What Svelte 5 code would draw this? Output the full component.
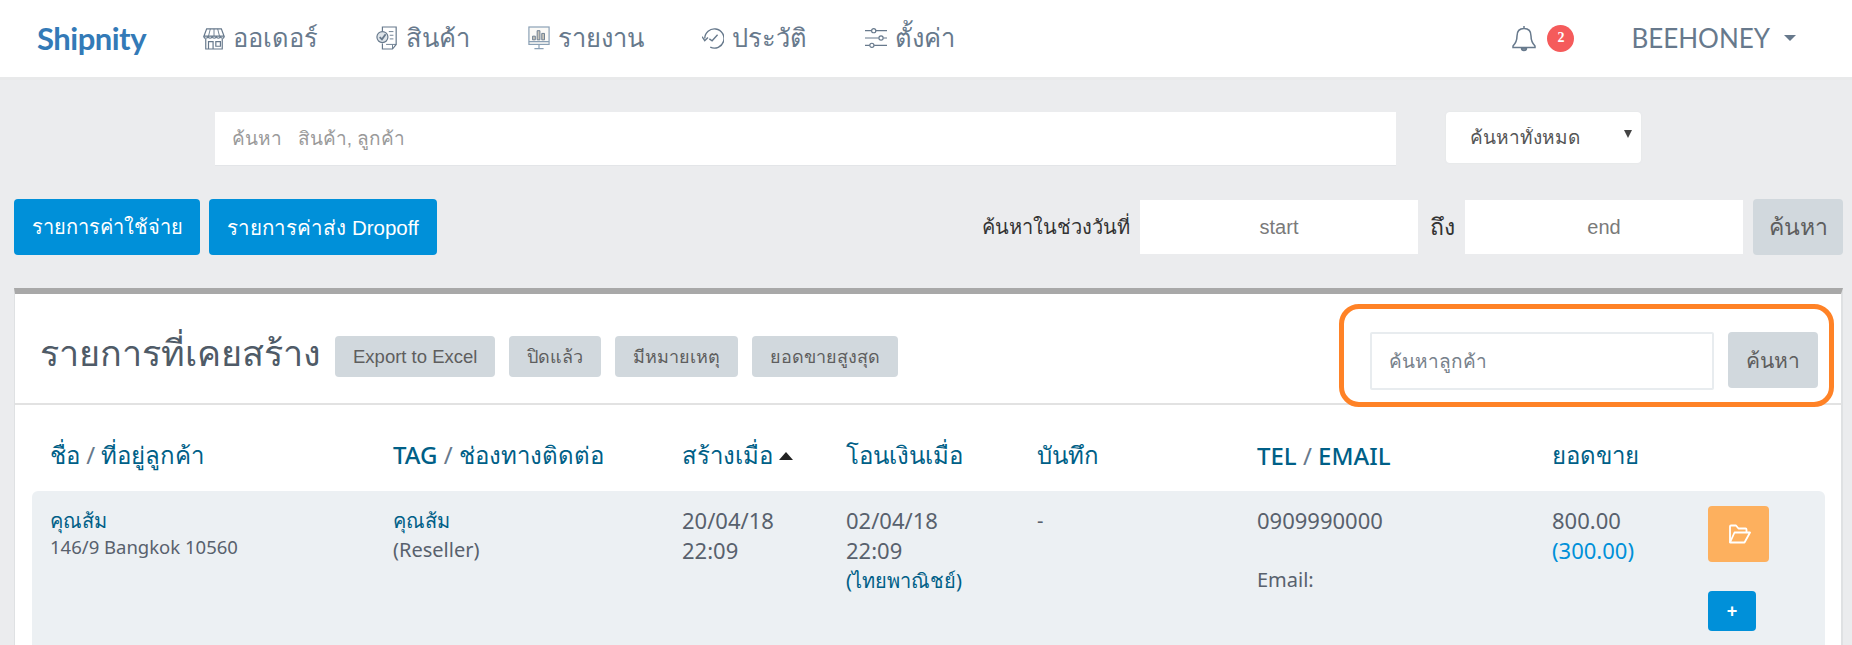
<script lang="ts">
	const navItems = [
		{ label: 'ออเดอร์', icon: 'store' },
		{ label: 'สินค้า', icon: 'doc' },
		{ label: 'รายงาน', icon: 'report' },
		{ label: 'ประวัติ', icon: 'history' },
		{ label: 'ตั้งค่า', icon: 'sliders' }
	];
	const filters = ['Export to Excel', 'ปิดแล้ว', 'มีหมายเหตุ', 'ยอดขายสูงสุด'];
</script>

<header class="navbar">
	<a class="brand" href="#top">Shipnity</a>
	<nav class="menu">
		{#each navItems as item}
			<a class="menu-item {item.icon}" href="#top">
				<svg viewBox="0 0 24 26" width="22" height="24" fill="none" stroke="#67798c" stroke-width="1.3">
					{#if item.icon === 'store'}
						<path d="M4 3h16l3 8H1z" />
						<path d="M8 3l-2 8M12 3v8M16 3l2 8" stroke-width="1" />
						<path d="M1 11c0 3 4 3 4.500 0 .5 3 4 3 4.500 0 .5 3 4 3 4.500 0 .5 3 4 3 4.500 0 .5 3 4 3 4 0" />
						<path d="M3 14v11h18V14M6 25v-8h5v8M14 17h5v5h-5z" />
					{:else if item.icon === 'doc'}
						<path d="M7 6V1h15v19l-4 5H7v-6" />
						<path d="M22 20h-4v5M14 6h5M15 10h4M15 14h4M11 20h7" stroke-width="1" />
						<circle cx="7" cy="12" r="6" fill="#dfe5ea" />
						<path d="M4 12l2.500 2.500L10.500 9" stroke-width="2" />
					{:else if item.icon === 'report'}
						<rect x="1" y="1" width="22" height="19" stroke="#8aa0b5" fill="#fbfaf7" />
						<path d="M1 17h22M12 20v4M7 24.500h10" stroke="#8aa0b5" />
						<path d="M5 15v-4h3v4zM10 15V5h3v10zM15 15V8h3v7z" fill="#c9c5ba" stroke="#67798c" stroke-width="1" />
					{:else if item.icon === 'history'}
						<path d="M9 23A10.500 10.500 0 1 0 3 13.500" stroke-width="1.500" />
						<path d="M0 11.500l3 4.500 3.500-3.500" stroke-width="1.500" />
						<path d="M8 14l3 2 6-6.500" stroke-width="1.500" />
					{:else}
						<path d="M0 5h7M12 5h12M0 13h15M20 13h4M0 21h5M10 21h14" />
						<circle cx="9.500" cy="5" r="2.300" />
						<circle cx="17.500" cy="13" r="2.300" />
						<circle cx="7.500" cy="21" r="2.300" />
					{/if}
				</svg>
				<span>{item.label}</span>
			</a>
		{/each}
	</nav>
	<div class="user-area">
		<svg class="bell" viewBox="0 0 24 27" width="24" height="27" fill="none" stroke="#67798c" stroke-width="1.500">
			<path d="M12 1v2.500M12 3.500c-4.500 0-7 3-7 7.500 0 5-2 8-4 10v1.500h22V21c-2-2-4-5-4-10 0-4.500-2.500-7.500-7-7.500z" />
			<path d="M9.500 23a2.500 2.500 0 0 0 5 0z" fill="#8b98a5" />
		</svg>
		<span class="badge">2</span>
		<span class="username">BEEHONEY</span>
		<span class="caret"></span>
	</div>
</header>

<main>
	<form class="search-row">
		<input class="main-search" type="text" placeholder="ค้นหา   สินค้า, ลูกค้า" />
		<div class="select-wrap">
			<select>
				<option>ค้นหาทั้งหมด</option>
			</select>
		</div>
	</form>

	<div class="toolbar">
		<div class="actions">
			<button class="btn-blue first">รายการค่าใช้จ่าย</button>
			<button class="btn-blue second">รายการค่าส่ง Dropoff</button>
		</div>
		<div class="date-range">
			<span class="range-label">ค้นหาในช่วงวันที่</span>
			<input class="date" type="text" placeholder="start" />
			<span class="range-to">ถึง</span>
			<input class="date" type="text" placeholder="end" />
			<button class="btn-grey range-go">ค้นหา</button>
		</div>
	</div>

	<section class="card">
		<div class="card-head">
			<h2>รายการที่เคยสร้าง</h2>
			<div class="filters">
				{#each filters as label}
					<button class="btn-grey filter">{label}</button>
				{/each}
			</div>
			<div class="customer-search">
				<input type="text" placeholder="ค้นหาลูกค้า" />
				<button class="btn-grey">ค้นหา</button>
				<div class="highlight"></div>
			</div>
		</div>

		<table>
			<thead>
				<tr>
					<th>ชื่อ <i>/</i> ที่อยู่ลูกค้า</th>
					<th>TAG <i>/</i> ช่องทางติดต่อ</th>
					<th>สร้างเมื่อ <span class="sort"></span></th>
					<th>โอนเงินเมื่อ</th>
					<th>บันทึก</th>
					<th>TEL <i>/</i> EMAIL</th>
					<th>ยอดขาย</th>
					<th></th>
				</tr>
			</thead>
			<tbody>
				<tr>
					<td class="customer"><b>คุณส้ม</b><small>146/9 Bangkok 10560</small></td>
					<td><b>คุณส้ม</b><br />(Reseller)</td>
					<td><span class="num">20/04/18<br />22:09</span></td>
					<td><span class="num">02/04/18<br />22:09</span><br /><span class="bank">(ไทยพาณิชย์)</span></td>
					<td>-</td>
					<td><span class="num">0909990000</span><br /><br />Email:</td>
					<td><span class="num">800.00<br /><span class="paid">(300.00)</span></span></td>
					<td class="row-actions">
						<button class="open" aria-label="open">
							<svg viewBox="0 0 24 20" width="24" height="20" fill="none" stroke="#fff" stroke-width="1.800" stroke-linejoin="round">
								<path d="M3 18.500V2.500a1 1 0 0 1 1-1h5l2.500 3h7a1 1 0 0 1 1 1V8" />
								<path d="M3 18.500h14.500L23 8.500H7.500z" />
							</svg>
						</button>
						<button class="add">+</button>
					</td>
				</tr>
			</tbody>
		</table>
	</section>
</main>

<style>
	:global(body) {
		margin: 0;
		background: #ebecee;
		overflow: hidden;
		font-family: "Liberation Sans", Arial, sans-serif;
	}

	.navbar {
		display: flex;
		align-items: center;
		height: 76px;
		background: #fff;
		border-bottom: 3px solid #e8e9ea;
		padding: 0 0 1px 37px;
	}

	.brand {
		font-family: Lato, sans-serif;
		font-size: 31px;
		font-weight: 700;
		color: #337ab7;
		text-decoration: none;
		width: 166px;
		letter-spacing: -0.5px;
	}

	.menu {
		display: flex;
		gap: 58px;
	}

	.menu-item {
		display: flex;
		align-items: center;
		gap: 8px;
		color: #67798c;
		text-decoration: none;
		font-family: "Noto Sans", sans-serif;
		font-size: 25.500px;
	}

	.user-area {
		display: flex;
		align-items: center;
		margin-left: auto;
		padding-right: 56px;
	}

	.badge {
		width: 27px;
		height: 27px;
		border-radius: 50%;
		background: #f55b5b;
		color: #fff;
		font: bold 14px "Liberation Serif", serif;
		display: flex;
		align-items: center;
		justify-content: center;
		margin-left: 11px;
	}

	.username {
		margin-left: 57px;
		font-family: Lato, sans-serif;
		font-size: 26px;
		color: #67798c;
	}

	.caret {
		margin-left: 14px;
		border-left: 6.500px solid transparent;
		border-right: 6.500px solid transparent;
		border-top: 6px solid #67798c;
	}

	.search-row {
		display: flex;
		gap: 50px;
		padding: 32px 0 0 215px;
	}

	input {
		box-sizing: border-box;
		border: none;
		background: #fff;
		font-family: "Liberation Sans", Arial, sans-serif;
		outline: none;
	}

	.main-search {
		width: 1181px;
		height: 54px;
		padding: 0 17px;
		font-size: 19px;
		border-bottom: 1px solid #e3e5e8;
		white-space: pre;
	}

	.main-search::placeholder {
		color: #9a9a9a;
	}

	.select-wrap {
		position: relative;
		width: 195px;
		height: 51px;
	}

	.select-wrap::after {
		content: '';
		position: absolute;
		right: 9px;
		top: 18px;
		border-left: 4.500px solid transparent;
		border-right: 4.500px solid transparent;
		border-top: 8px solid #444;
	}

	select {
		appearance: none;
		width: 100%;
		height: 100%;
		border: none;
		border-radius: 4px;
		background: #fff;
		padding: 0 0 0 24px;
		font-family: "Liberation Sans", Arial, sans-serif;
		font-size: 19px;
		color: #555;
		box-shadow: 0 0 2px #e0e2e5;
	}

	.toolbar {
		display: flex;
		justify-content: space-between;
		align-items: center;
		padding: 33px 9px 0 14px;
	}

	.actions {
		display: flex;
		gap: 9px;
	}

	button {
		border: none;
		font-family: "Liberation Sans", Arial, sans-serif;
	}

	.btn-blue {
		height: 56px;
		background: #0090d9;
		color: #fff;
		border-radius: 4px;
		font-size: 20px;
		padding: 0;
	}

	.first {
		width: 186px;
	}

	.second {
		width: 228px;
		font-size: 20.500px;
	}

	.btn-grey {
		background: #d1d8dd;
		color: #5e5e5e;
		border-radius: 4px;
		padding: 0;
	}

	.date-range {
		display: flex;
		align-items: center;
	}

	.range-label,
	.range-to {
		font-size: 20px;
		color: #333;
		font-weight: 400;
	}

	.range-label {
		margin-right: 10px;
	}

	.range-to {
		margin: 0 10px 0 12px;
		font-size: 23px;
	}

	.date {
		width: 278px;
		height: 54px;
		text-align: center;
		font-size: 20px;
	}

	.date::placeholder {
		color: #7a7a7a;
	}

	.range-go {
		width: 90px;
		height: 56px;
		margin-left: 10px;
		font-size: 23px;
	}

	.card {
		margin: 33px 9px 0 14px;
		background: #fff;
		border-top: 6px solid #a8a8a8;
		border-left: 1px solid #dfe1e3;
		border-right: 2px solid #dfe1e3;
	}

	.card-head {
		display: flex;
		align-items: center;
		height: 93px;
		padding: 16px 23px 0 25px;
		border-bottom: 2px solid #e2e2e2;
	}

	h2 {
		margin: 0 0 6px;
		font-family: "Noto Sans", sans-serif;
		font-weight: 400;
		font-size: 36px;
		color: #4f5b67;
	}

	.filters {
		display: flex;
		gap: 14px;
		margin-left: 14px;
	}

	.filter {
		height: 41px;
		padding: 0 18px;
		font-size: 18px;
	}

	.filter:first-child {
		font-size: 18.500px;
	}

	.customer-search {
		position: relative;
		display: flex;
		gap: 14px;
		margin-left: auto;
		margin-top: 9px;
	}

	.customer-search input {
		width: 344px;
		height: 58px;
		border: 2px solid #e8ecef;
		border-radius: 2px;
		padding: 0 17px;
		font-family: "Noto Sans", sans-serif;
		font-size: 19px;
	}

	.customer-search input::placeholder {
		color: #77818b;
	}

	.customer-search .btn-grey {
		width: 90px;
		height: 56px;
		font-family: "Noto Sans", sans-serif;
		font-size: 21px;
	}

	.highlight {
		position: absolute;
		left: -31px;
		top: -28px;
		right: -16px;
		bottom: -17px;
		border: 5px solid #ff8226;
		border-radius: 20px;
		pointer-events: none;
	}

	table {
		border-collapse: separate;
		border-spacing: 0;
		table-layout: fixed;
		width: 1793px;
		margin-left: 17px;
		font-family: "Noto Sans", sans-serif;
		font-size: 20px;
		color: #58616d;
	}

	th {
		height: 72px;
		padding: 14px 0 0 18px;
		text-align: left;
		font-size: 24px;
		font-weight: 500;
		color: #005f87;
	}

	th:nth-child(1) { width: 325px; }
	th:nth-child(2) { width: 271px; }
	th:nth-child(3) { width: 146px; }
	th:nth-child(4) { width: 173px; }
	th:nth-child(5) { width: 202px; }
	th:nth-child(6) { width: 277px; }
	th:nth-child(7) { width: 138px; }

	th i {
		font-style: normal;
		font-weight: 400;
		color: #67798c;
	}

	.sort {
		display: inline-block;
		margin-left: 0;
		vertical-align: 4px;
		border-left: 7px solid transparent;
		border-right: 7px solid transparent;
		border-bottom: 8px solid #222;
	}

	td {
		vertical-align: top;
		padding: 15px 0 0 18px;
		line-height: 29px;
		background: #ecf0f3;
	}

	.num {
		font-size: 22px;
	}

	td:first-child {
		border-radius: 6px 0 0 0;
	}

	td:last-child {
		border-radius: 0 6px 0 0;
	}

	td b {
		font-weight: 500;
		color: #005f87;
	}

	.customer b,
	.customer small {
		display: block;
	}

	.customer small {
		font-size: 18.500px;
		line-height: 24px;
	}

	.bank {
		color: #005f87;
	}

	.paid {
		color: #0090d9;
	}

	.row-actions {
		height: 200px;
	}

	.open {
		display: flex;
		align-items: center;
		justify-content: center;
		width: 61px;
		height: 56px;
		background: #fdb05e;
		border-radius: 4px;
		padding: 0;
	}

	.add {
		display: block;
		width: 48px;
		height: 40px;
		margin-top: 29px;
		background: #0090d9;
		color: #fff;
		border-radius: 4px;
		font-size: 18px;
		font-weight: 700;
		padding: 0;
	}
</style>
